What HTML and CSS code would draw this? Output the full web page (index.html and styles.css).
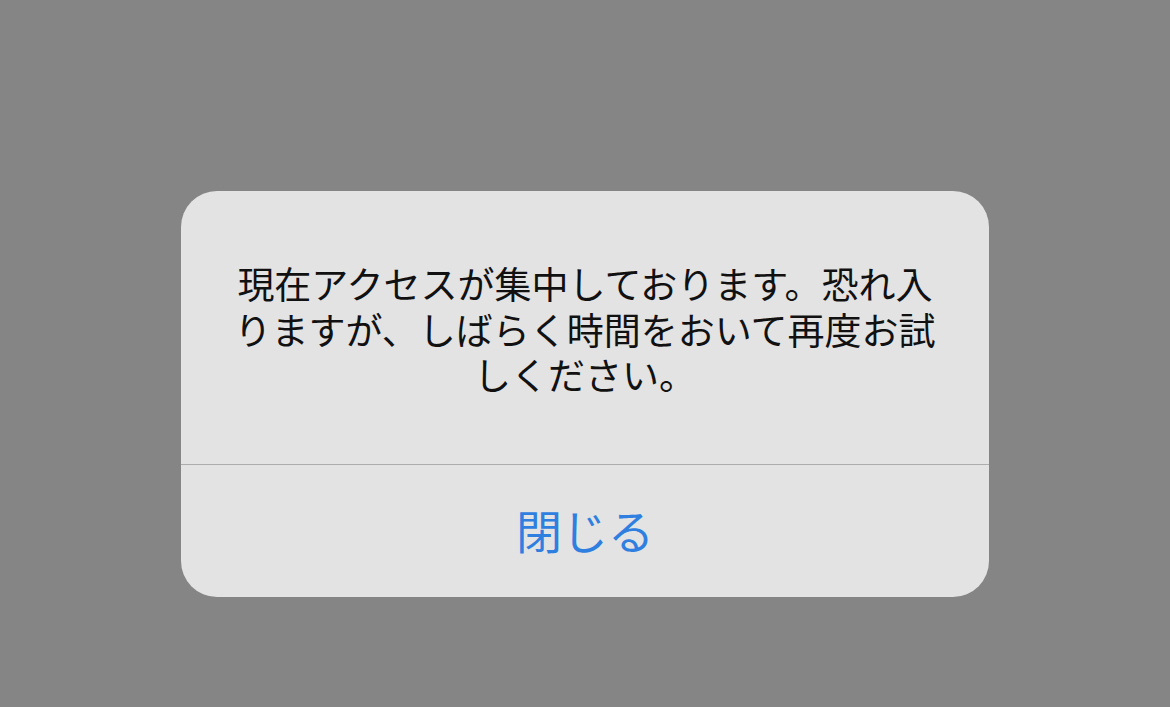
FILE: index.html
```html
<!DOCTYPE html>
<html lang="ja">
<head>
<meta charset="utf-8">
<link rel="stylesheet" href="styles.css">
</head>
<body>
<div class="dialog">
  <div class="message">現在アクセスが集中しております。恐れ入りますが、しばらく時間をおいて再度お試しください。</div>
  <div class="divider"></div>
  <div class="button">閉じる</div>
</div>
</body>
</html>
```
FILE: styles.css
```css
html, body {
  margin: 0;
  padding: 0;
  background: #858585;
  width: 1170px;
  height: 707px;
  overflow: hidden;
  font-family: "Noto Sans CJK JP", "Noto Sans", sans-serif;
}
.dialog {
  width: 808px;
  margin: 191px auto 0;
  background: #e3e3e3;
  border-radius: 36px;
  overflow: hidden;
}
.message {
  box-sizing: border-box;
  height: 273px;
  padding: 70px 48px 0;
  font-size: 37px;
  line-height: 45.5px;
  color: #111;
  text-align: center;
}
.divider {
  height: 1px;
  background: #adadad;
}
.button {
  box-sizing: border-box;
  height: 132px;
  padding-bottom: 5px;
  display: flex;
  align-items: center;
  justify-content: center;
  font-size: 46px;
  color: #2f7fe0;
}
```
